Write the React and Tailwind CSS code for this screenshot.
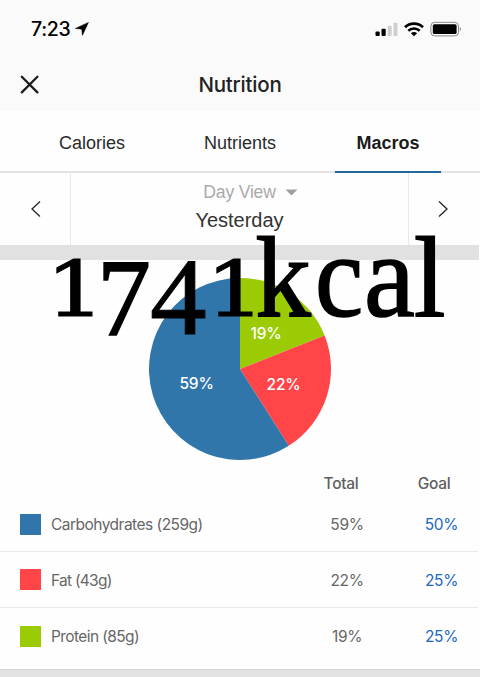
import React, { useState } from 'react';
import clsx from 'clsx';

const MACROS = [
  { name: 'Carbohydrates', grams: 259, total: 59, goal: 50, swatch: 'bg-[#3176ab]', spacing: 'tracking-[-0.52px]' },
  { name: 'Fat', grams: 43, total: 22, goal: 25, swatch: 'bg-[#ff4548]', spacing: 'tracking-[-0.75px]' },
  { name: 'Protein', grams: 85, total: 19, goal: 25, swatch: 'bg-[#9bcb05]', spacing: 'tracking-[-0.6px]' },
];

const TABS = ['Calories', 'Nutrients', 'Macros'];

// Slices run clockwise from twelve o'clock
const SLICES = [
  { value: 19, color: '#9bcb05', x: 266, y: 78.5 },
  { value: 22, color: '#ff4548', x: 283.5, y: 130 },
  { value: 59, color: '#3176ab', x: 196.5, y: 129 },
];

// Old style figures: the 7 and the 4 hang below the baseline
const GLYPHS = [
  { char: '1', x: 45.5, y: 56, size: 77, sx: 1.22, serif: 'DejaVu Serif', stroke: 1 },
  { char: '7', x: 97, y: 74.5, size: 111, sx: 0.97, serif: 'Liberation Serif', stroke: 1.6 },
  { char: '4', x: 150, y: 74, size: 110, sx: 1.03, serif: 'Liberation Serif', stroke: 1 },
  { char: '1', x: 205.5, y: 56, size: 77, sx: 1.22, serif: 'DejaVu Serif', stroke: 1 },
  { char: 'k', x: 255.5, y: 55.5, size: 115, sx: 0.96, serif: 'Liberation Serif', stroke: 1.8 },
  { char: 'c', x: 315, y: 55.5, size: 118, sx: 0.92, serif: 'Liberation Serif', stroke: 1.6 },
  { char: 'a', x: 364, y: 55.5, size: 118, sx: 0.97, serif: 'Liberation Serif', stroke: 1.6 },
  { char: 'l', x: 414, y: 55.5, size: 115, sx: 0.98, serif: 'Liberation Serif', stroke: 1.8 },
];

function slicePath(start, end, cx, cy, r) {
  const point = (pct) => {
    const angle = (pct / 100) * Math.PI * 2;
    return `${cx + r * Math.sin(angle)} ${cy - r * Math.cos(angle)}`;
  };
  return `M${cx} ${cy}L${point(start)}A${r} ${r} 0 ${end - start > 50 ? 1 : 0} 1 ${point(end)}Z`;
}

function StatusBar() {
  return (
    <div className="flex h-[57px] items-center justify-between pl-[31px] pr-[18px] pt-px">
      <div className="flex items-center gap-[5px]">
        <span className="pt-0.5 font-['Inter',sans-serif] text-[19.5px] font-medium tracking-[-0.3px] text-black">7:23</span>
        <svg width="14" height="14" viewBox="0 0 14 14">
          <path d="M13.4 0.4L0.4 6.4L6.8 7.2L7.4 13.4Z" fill="#000" stroke="#000" strokeWidth="0.5" strokeLinejoin="round" />
        </svg>
      </div>
      <div className="flex items-center gap-[6px]">
        <svg width="23" height="15" viewBox="0 0 23 15">
          <rect x="0.5" y="9.5" width="4.2" height="4.5" rx="1" fill="#000" />
          <rect x="6.5" y="6.7" width="4.2" height="7.3" rx="1" fill="#000" />
          <rect x="12.7" y="3.8" width="4" height="10.2" rx="1" fill="#cfcfcf" />
          <rect x="18.5" y="0.8" width="4" height="13.2" rx="1" fill="#cfcfcf" />
        </svg>
        <svg width="20" height="15" viewBox="0 0 20 15" fill="none" stroke="#000" strokeWidth="2.6">
          <path d="M1 5.3C6 0.4 14 0.4 19 5.3" />
          <path d="M4.3 8.8C7.5 5.7 12.5 5.7 15.7 8.8" />
          <path d="M10 14.2L6.9 11.2C8.7 9.6 11.3 9.6 13.1 11.2Z" fill="#000" stroke="none" />
        </svg>
        <svg width="32" height="16" viewBox="0 0 32 16">
          <rect x="0.9" y="1.3" width="27.6" height="13.6" rx="3.8" fill="none" stroke="#888" strokeWidth="1" />
          <rect x="2.8" y="3.2" width="23.8" height="9.8" rx="1.6" fill="#000" />
          <path d="M29.8 6C31.4 6.7 31.4 9.5 29.8 10.2Z" fill="#888" />
        </svg>
      </div>
    </div>
  );
}

function MacroChart() {
  let start = 0;
  return (
    <svg className="block" width="480" height="210" viewBox="0 0 480 210">
      {SLICES.map((slice) => {
        const from = start;
        start += slice.value;
        return <path key={slice.value} d={slicePath(from, start, 240, 109, 91)} fill={slice.color} />;
      })}
      {SLICES.map((slice) => (
        <text
          key={slice.value}
          x={slice.x}
          y={slice.y}
          textAnchor="middle"
          className="fill-white font-['Inter',sans-serif] text-[15.5px] font-medium tracking-[-0.2px]"
        >
          {slice.value}%
        </text>
      ))}
    </svg>
  );
}

export default function App() {
  const [activeTab, setActiveTab] = useState('Macros');

  return (
    <div className="h-[677px] w-[480px] overflow-hidden bg-[#fefefe] font-['Liberation_Sans',sans-serif]">
      {/* Header */}
      <header className="h-[111px] bg-[#fafafa]">
        <StatusBar />
        <div className="grid h-[55px] grid-cols-[1fr_auto_1fr] items-center">
          <button type="button" aria-label="Close" className="ml-5 w-5">
            <svg width="20" height="20" viewBox="0 0 20 20" stroke="#1c1c1c" strokeWidth="2.3" strokeLinecap="round">
              <path d="M1.8 1.8L17.4 17.4M17.4 1.8L1.8 17.4" />
            </svg>
          </button>
          <h1 className="pt-px font-['Inter',sans-serif] text-[20.5px] font-medium tracking-[-0.2px] text-[#222]">Nutrition</h1>
        </div>
      </header>

      {/* Tabs */}
      <nav className="flex h-[62px] justify-center border-b-2 border-[#e3e3e3]">
        {TABS.map((tab) => (
          <button
            key={tab}
            type="button"
            onClick={() => setActiveTab(tab)}
            className="flex w-[148px] justify-center"
          >
            <span
              className={clsx(
                '-mb-0.5 flex h-[62px] w-[106px] items-center justify-center pt-[5px] text-[18px]',
                activeTab === tab ? 'border-b-[2.5px] border-[#22689f] font-bold text-[#1b1b1b]' : 'border-b-2 border-transparent text-[#2a2a2a]'
              )}
            >
              {tab}
            </span>
          </button>
        ))}
      </nav>

      {/* Day picker */}
      <div className="flex h-[72px]">
        <button type="button" aria-label="Previous day" className="flex w-[71px] items-center justify-center border-r border-[#e9e9e9] pl-0.5">
          <svg width="10" height="16" viewBox="0 0 10 16" fill="none" stroke="#222" strokeWidth="1.3">
            <path d="M9 0.6L1 8L9 15.4" />
          </svg>
        </button>
        <div className="flex flex-1 flex-col items-center">
          <div className="ml-[22px] mt-[7px] flex h-6 items-center gap-[9px] text-[17.6px] tracking-[-0.2px] text-[#aaa]">
            Day View
            <svg width="13" height="7" viewBox="0 0 13 7">
              <path d="M0.5 0.4H12.5L6.5 6.6Z" fill="#a0a0a0" />
            </svg>
          </div>
          <div className="mt-0.5 text-[20px] leading-7 text-[#333]">Yesterday</div>
        </div>
        <button type="button" aria-label="Next day" className="flex w-[72px] items-center justify-center border-l border-[#e9e9e9] pr-[3px]">
          <svg width="10" height="16" viewBox="0 0 10 16" fill="none" stroke="#222" strokeWidth="1.3">
            <path d="M1 0.6L9 8L1 15.4" />
          </svg>
        </button>
      </div>
      <div className="mr-px h-[15px] bg-[#e1e1e1]" />

      {/* Chart with the calorie caption over it */}
      <section className="relative h-[210px]">
        <MacroChart />
        <svg className="absolute inset-0 overflow-visible" width="480" height="210" viewBox="0 0 480 210">
          {GLYPHS.map((g, i) => (
            <text
              key={i}
              transform={`translate(${g.x} ${g.y}) scale(${g.sx} 1)`}
              fontSize={g.size}
              fontFamily={`"${g.serif}", serif`}
              stroke="#000"
              strokeWidth={g.stroke}
            >
              {g.char}
            </text>
          ))}
        </svg>
      </section>

      {/* Totals */}
      <section className="font-['Inter',sans-serif] text-[15.5px] tracking-[-0.3px] text-[#666]">
        <div className="flex h-[27px] items-center pt-px font-medium text-[#5f5f5f]">
          <span className="ml-auto w-[92px] text-center">Total</span>
          <span className="w-[93px] pl-px text-center">Goal</span>
        </div>
        {MACROS.map((macro, i) => (
          <div
            key={macro.name}
            className={clsx('mr-0.5 flex items-center pl-5', i === 0 ? 'h-[55px]' : 'h-14', i < MACROS.length - 1 && 'border-b border-[#e9e9e9]')}
          >
            <span className={clsx('size-[21px]', macro.swatch)} />
            <span className={clsx('ml-2.5 pt-0.5', macro.spacing)}>
              {macro.name} ({macro.grams}g)
            </span>
            <span className="ml-auto w-[94px] pt-0.5 text-center">{macro.total}%</span>
            <span className="w-[84px] pl-[11px] pt-0.5 text-center text-[#2367c0]">{macro.goal}%</span>
          </div>
        ))}
      </section>
      <div className="mt-[5px] h-2 border-t border-[#d6d6d6] bg-[#e3e3e3]" />
    </div>
  );
}
